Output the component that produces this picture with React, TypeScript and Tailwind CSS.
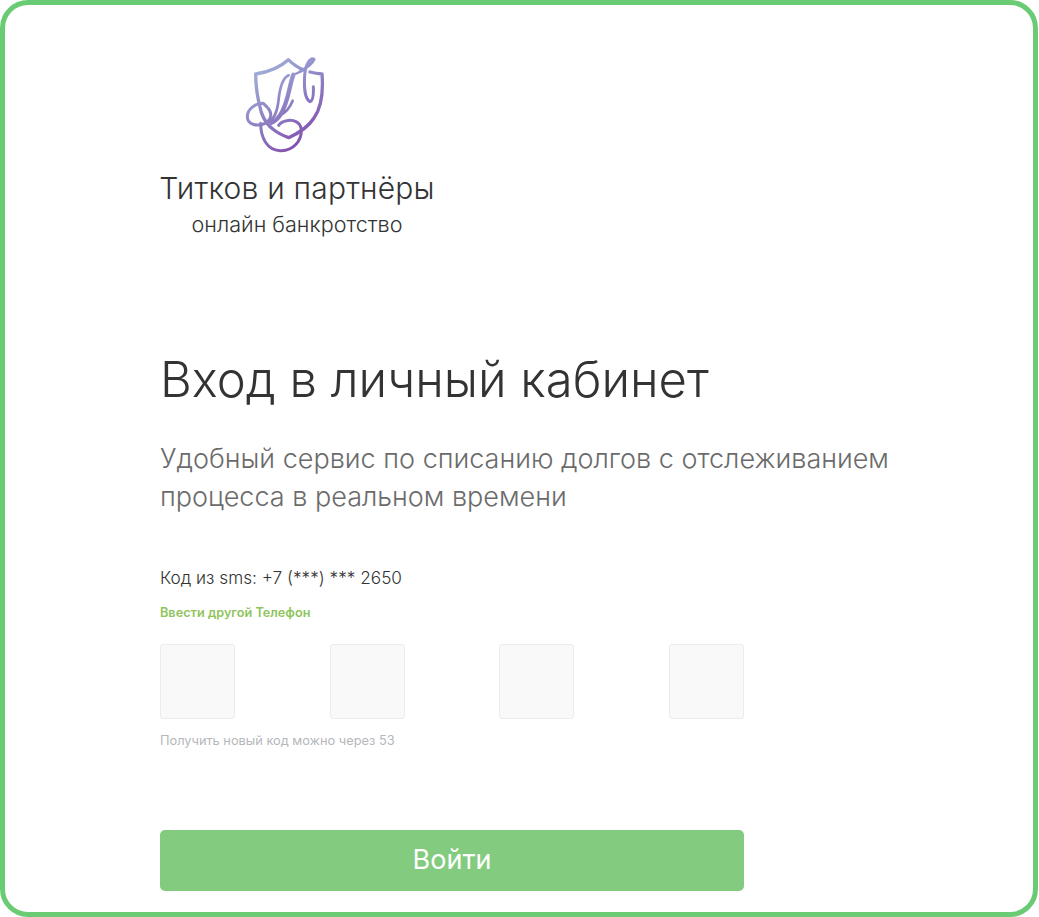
import React from 'react';

const Logo: React.FC = () => (
  <svg width="110" height="115" viewBox="0 0 330 345" fill="none" className="blur-[0.4px]">
    <defs>
      <linearGradient id="logoGrad" x1="70" y1="50" x2="270" y2="320" gradientUnits="userSpaceOnUse">
        <stop offset="0" stopColor="#a3b8de" />
        <stop offset="0.45" stopColor="#8f85c6" />
        <stop offset="1" stopColor="#7f3fa6" />
      </linearGradient>
    </defs>
    <g stroke="url(#logoGrad)" strokeLinecap="round" strokeLinejoin="round">
      {/* shield */}
      <path strokeWidth="10" d="M77 90 C115 84 150 70 175 47 C188 60 205 72 222 78 M240 84 C252 87 264 89 276 90 C280 140 274 190 252 222 C234 250 205 268 176 281 C160 275 145 268 132 258 C115 246 102 228 94 205 C84 170 77 130 77 90" />
      {/* left letter */}
      <path strokeWidth="8" d="M176 94 C158 102 150 128 146 165 C143 195 136 222 118 232" />
      <path strokeWidth="13" d="M190 92 C176 130 176 175 150 214 C143 225 134 232 124 236" />
      <path strokeWidth="8" d="M150 214 C168 205 180 190 188 170" />
      {/* right letter with top loop */}
      <path strokeWidth="9" d="M212 82 C228 72 246 60 252 46 C240 38 226 62 224 95 C222 125 224 165 240 173 C250 170 251 150 250 128" />
      <path strokeWidth="7" d="M190 92 C198 90 206 86 212 82" />
      {/* flourish */}
      <path strokeWidth="9" d="M100 178 C76 178 52 195 52 218 C52 240 80 250 105 238 C125 228 128 205 112 190 C108 186 104 182 100 178" />
      <path strokeWidth="9" d="M92 238 C92 280 110 318 150 320 C190 322 215 290 214 258 C213 234 190 226 170 230 C158 232 150 238 146 244" />
    </g>
  </svg>
);

const CodeCell: React.FC = () => (
  <input className="w-[75px] h-[75px] rounded-[3px] border border-[#ececec] bg-[#f9f9f9] outline-none" />
);

export default function App() {
  return (
    <div className="w-[1039px] h-[917px] bg-white overflow-hidden font-['Inter',sans-serif]">
      <div className="h-full border-[5px] border-[#69cb74] rounded-[28px] pl-[155px] pt-[39px] mr-[1px]">
        <div className="w-[274px] flex flex-col items-center">
          <div className="mr-[24px]">
            <Logo />
          </div>
          <div className="mt-[13px] text-[30px] leading-[32px] font-light tracking-[0.2px] text-[#333333] whitespace-nowrap">Титков и партнёры</div>
          <div className="mt-[8px] text-[21.6px] leading-[24px] font-light text-[#333333] whitespace-nowrap">онлайн банкротство</div>
        </div>

        <h1 className="mt-[115px] text-[49px] leading-[58px] font-light text-[#333333] whitespace-nowrap">Вход в личный кабинет</h1>
        <p className="mt-[31px] w-[780px] text-[27px] leading-[38px] font-light text-[#6b6b6b]">
          Удобный сервис по списанию долгов с отслеживанием процесса в реальном времени
        </p>

        <div className="mt-[52px] text-[17.2px] leading-[20px] font-light text-[#333333]">Код из sms: +7 (***) *** 2650</div>
        <a className="block mt-[17px] text-[12.7px] leading-[16px] font-semibold text-[#8fc45c]">Ввести другой Телефон</a>

        <div className="mt-[23px] w-[584px] flex justify-between">
          <CodeCell />
          <CodeCell />
          <CodeCell />
          <CodeCell />
        </div>
        <div className="mt-[15px] text-[12.8px] leading-[14px] text-[#b5b7bc]">Получить новый код можно через 53</div>

        <button className="block mt-[82px] w-[584px] h-[61px] rounded-[5px] bg-[#83cb7f] text-white text-[27px] font-normal">Войти</button>
      </div>
    </div>
  );
}
